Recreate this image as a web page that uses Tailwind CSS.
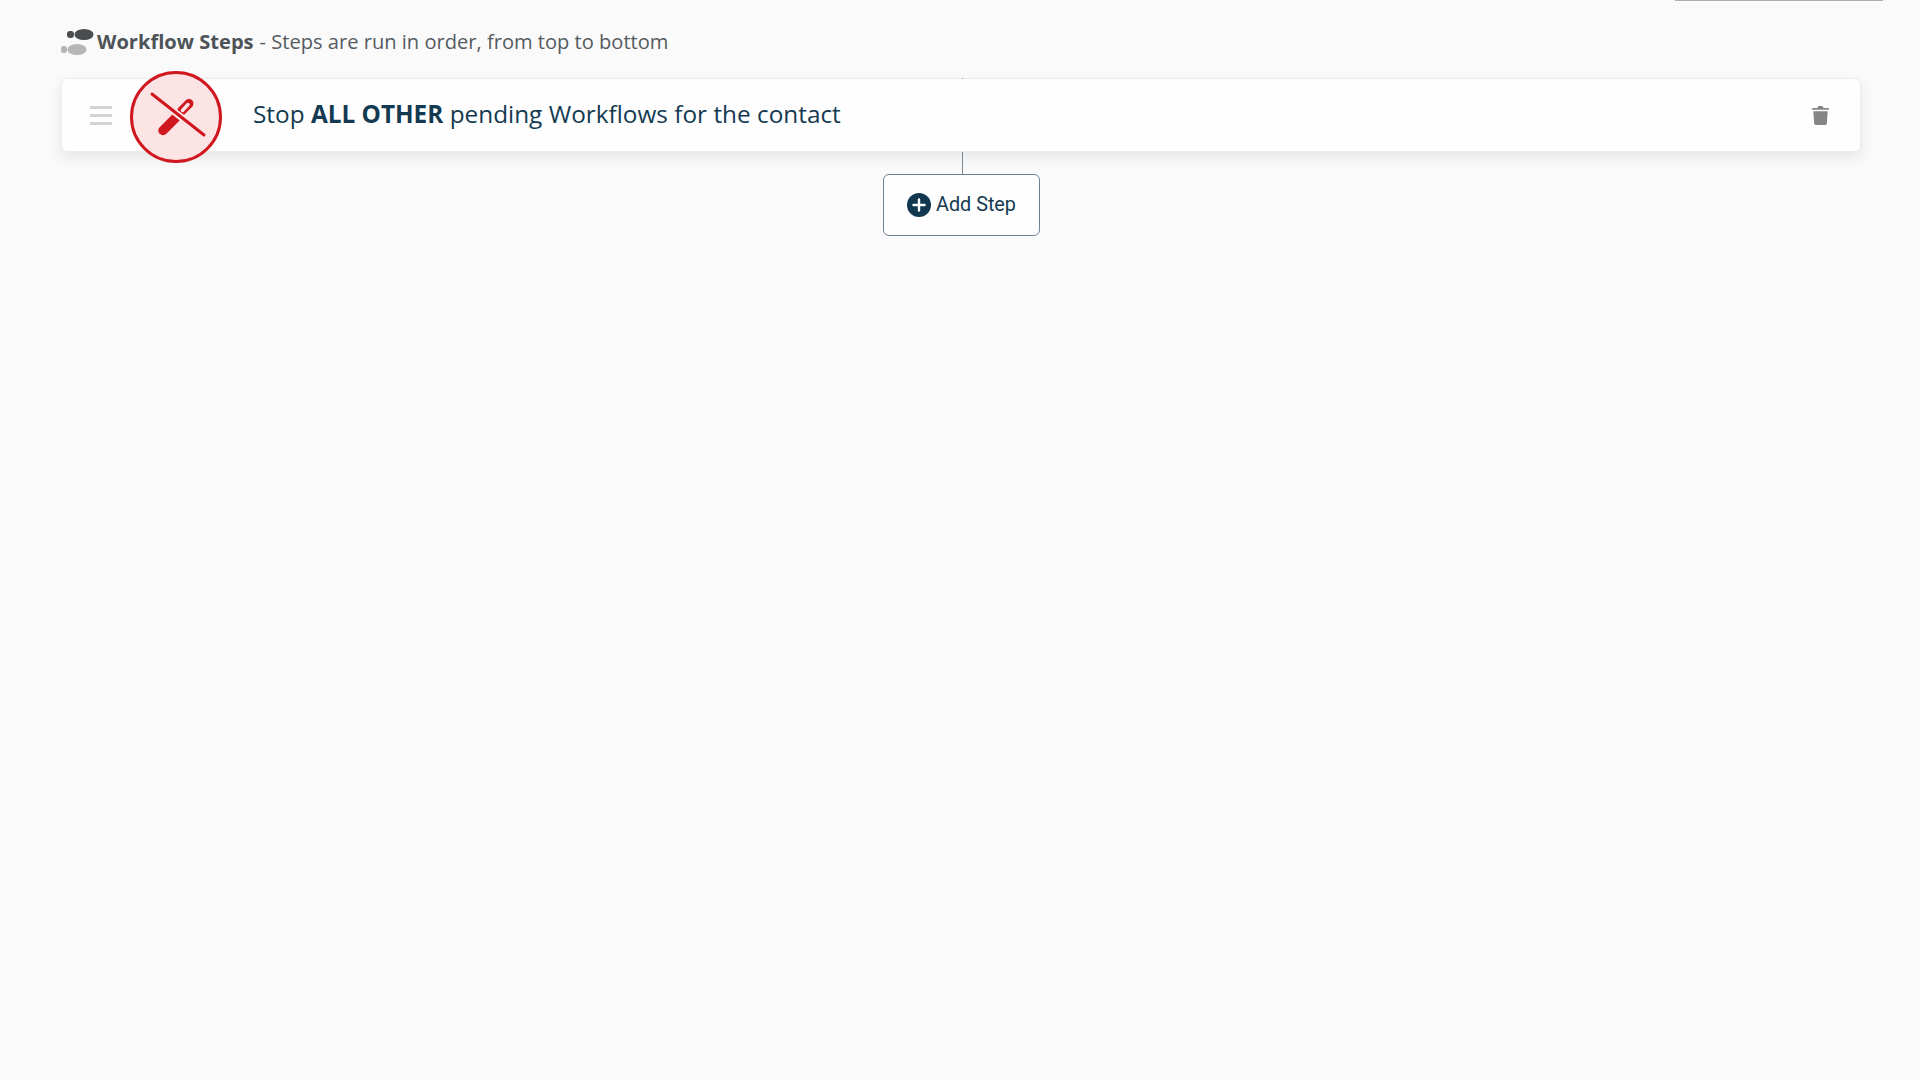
<!DOCTYPE html>
<html lang="en">
<head>
<meta charset="utf-8">
<title>Workflow Steps</title>
<script src="https://cdn.jsdelivr.net/npm/@tailwindcss/browser@4"></script>
</head>
<body class="bg-[#fafafa] font-['Open_Sans',sans-serif]">
<div class="relative h-[1080px] w-[1920px] overflow-hidden pt-[27px] pr-[59px] pl-[61px]">
    <!-- cut off panel at the very top -->
    <div class="absolute top-0 right-[37px] h-px w-[208px] bg-[#a9b1b8]"></div>

    <div class="flex h-[30px] items-center text-[20.1px] text-[#555b60]">
        <svg class="mr-[3px] h-[26px] w-[33px] shrink-0" viewBox="0 0 33 26">
            <g fill="#4a4d50">
                <ellipse cx="23" cy="5.5" rx="9.5" ry="5.5"/>
                <rect x="6" y="2" width="7" height="7" rx="3"/>
            </g>
            <g fill="#b4b6b8">
                <ellipse cx="16" cy="20.5" rx="9.5" ry="5.5"/>
                <rect x="0" y="17" width="6" height="7" rx="2.5"/>
            </g>
        </svg>
        <span class="font-bold text-[#4d5357]">Workflow Steps</span>
        <span class="ml-[6px]">- Steps are run in order, from top to bottom</span>
    </div>

    <div class="mt-[21px] flex flex-col items-center">
        <div class="relative flex h-[74px] w-full items-center rounded-[6px] border border-[#ececec] bg-[#fefefe] shadow-[0_6px_14px_rgba(30,40,60,0.09)]">
            <div class="absolute -top-px left-[900px] h-px w-px bg-[#8d99a3]"></div>
            <div class="ml-[28px] flex w-[22px] shrink-0 flex-col gap-[5px]">
                <div class="h-[3px] bg-[#d3d3d3]"></div>
                <div class="h-[3px] bg-[#d3d3d3]"></div>
                <div class="h-[3px] bg-[#d3d3d3]"></div>
            </div>
            <div class="relative ml-[18px] h-[92px] w-[92px] shrink-0 translate-y-[2px] rounded-full border-[3px] border-[#d0161e] bg-[#fde4e4]">
                <!-- viewBox is in page pixels so the strokes can be read off the reference -->
                <svg class="absolute -top-[3px] -left-[3px] h-[92px] w-[92px]" viewBox="130 72 92 92" fill="none">
                    <path d="M163 131.5 L177 117.5" stroke="#d0161e" stroke-width="9.5" stroke-linecap="round"/>
                    <path d="M181.5 112 L189 104.5" stroke="#d0161e" stroke-width="9" stroke-linecap="round"/>
                    <path d="M182.5 111.5 L188 105.5" stroke="#fde4e4" stroke-width="3.5" stroke-linecap="round"/>
                    <path d="M156 98.5 L204 136" stroke="#fde4e4" stroke-width="7"/>
                    <path d="M152 95 L204 136" stroke="#d0161e" stroke-width="3" stroke-linecap="round"/>
                </svg>
            </div>
            <div class="-mt-[2px] ml-[31px] text-[24.35px] leading-none text-[#143a52]">Stop <b class="font-bold">ALL OTHER</b> pending Workflows for the contact</div>
            <svg class="mr-[31px] ml-auto h-[19px] w-[17px] shrink-0" viewBox="0 0 16 18" fill="#858585">
                <path d="M5.5 1 Q5.7 0 6.7 0 H9.3 Q10.3 0 10.5 1 L10.8 2 H15.3 Q16 2 16 2.8 V3.6 H0 V2.8 Q0 2 .7 2 H5.2 Z"/>
                <path d="M1.2 5 H14.8 L14 16.6 Q13.9 18 12.5 18 H3.5 Q2.1 18 2 16.6 Z"/>
            </svg>
        </div>
        <div class="ml-[2px] h-[22px] w-px bg-[#7d8e9b]"></div>
        <button type="button" class="ml-px flex h-[62px] w-[157px] items-center justify-center rounded-[6px] border border-[#6b8296] bg-[#fefefe] font-['Roboto',sans-serif] text-[19.8px] text-[#143a52]">
            <svg class="mr-[5px] h-[24px] w-[24px]" viewBox="0 0 24 24">
                <circle cx="12" cy="12" r="12" fill="#12384f"/>
                <path d="M12 6.5 V17.5 M6.5 12 H17.5" stroke="#fff" stroke-width="2.4" stroke-linecap="round"/>
            </svg>
            Add Step
        </button>
    </div>
</div>
</body>
</html>
